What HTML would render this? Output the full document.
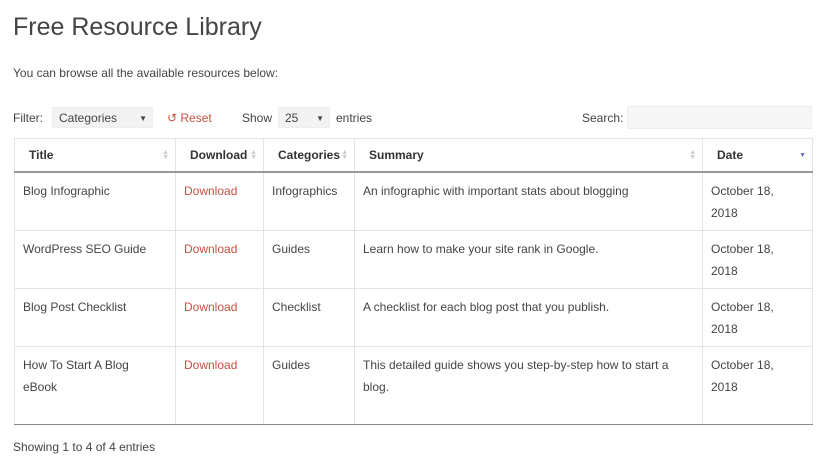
<!DOCTYPE html>
<html><head><style>
body{margin:0;width:820px;height:465px;background:#fff;font-family:"Liberation Sans",sans-serif;color:#444;position:relative;overflow:hidden}
.a{position:absolute;white-space:nowrap}
h1{position:absolute;left:13px;top:13px;margin:0;font-weight:normal;font-size:25px;color:#444}
.sel{position:absolute;background:#f3f3f3;border:1px solid #eee;height:21px;font-size:12px;line-height:21px;padding-left:6px;box-sizing:border-box}
.sel i{position:absolute;right:5px;top:0;font-style:normal;font-size:8px}
table{position:absolute;left:14px;top:138px;width:798px;border-collapse:collapse;font-size:12px;table-layout:fixed}
th,td{border:1px solid #e3e3e3;text-align:left;vertical-align:top}
th{height:32px;padding:0 0 0 14px;vertical-align:middle;font-weight:bold;color:#333;border-bottom:2px solid #999;position:relative}
td{padding:7px 8px 0 8px;line-height:22px;height:58px;box-sizing:border-box;color:#444}
tr:last-child td{border-bottom:1px solid #888;height:78px}
.r{color:#c9503e}
.s{position:absolute;right:6px;top:11px;font-size:7px;color:#ccc;line-height:5px}
</style></head><body>
<h1>Free Resource Library</h1>
<div class="a" style="left:13px;top:66px;font-size:12px">You can browse all the available resources below:</div>
<div class="a" style="left:13px;top:111px;font-size:12px">Filter:</div>
<div class="sel" style="left:52px;top:107px;width:101px">Categories<i>▼</i></div>
<div class="a r" style="left:167px;top:111px;font-size:12px">↺ Reset</div>
<div class="a" style="left:242px;top:111px;font-size:12px">Show</div>
<div class="sel" style="left:278px;top:107px;width:52px">25<i>▼</i></div>
<div class="a" style="left:336px;top:111px;font-size:12px">entries</div>
<div class="a" style="left:582px;top:111px;font-size:12px">Search:</div>
<div class="sel" style="left:627px;top:106px;width:185px;height:23px;background:#f7f7f7"></div>
<table>
<colgroup><col style="width:161px"><col style="width:88px"><col style="width:91px"><col style="width:348px"><col style="width:110px"></colgroup>
<tr><th>Title<span class="s">▲<br>▼</span></th><th style="padding-left:14px">Download<span class="s">▲<br>▼</span></th><th style="padding-left:14px">Categories<span class="s">▲<br>▼</span></th><th>Summary<span class="s">▲<br>▼</span></th><th>Date<span class="s" style="color:#6a6ad0;top:14px">▼</span></th></tr>
<tr><td>Blog Infographic</td><td class="r">Download</td><td>Infographics</td><td>An infographic with important stats about blogging</td><td>October 18,<br>2018</td></tr>
<tr><td>WordPress SEO Guide</td><td class="r">Download</td><td>Guides</td><td>Learn how to make your site rank in Google.</td><td>October 18,<br>2018</td></tr>
<tr><td>Blog Post Checklist</td><td class="r">Download</td><td>Checklist</td><td>A checklist for each blog post that you publish.</td><td>October 18,<br>2018</td></tr>
<tr><td>How To Start A Blog<br>eBook</td><td class="r">Download</td><td>Guides</td><td>This detailed guide shows you step-by-step how to start a<br>blog.</td><td>October 18,<br>2018</td></tr>
</table>
<div class="a" style="left:13px;top:440px;font-size:12px">Showing 1 to 4 of 4 entries</div>
</body></html>
